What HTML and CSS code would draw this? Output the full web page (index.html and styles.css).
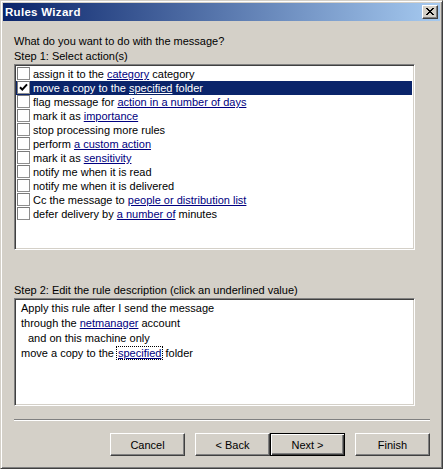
FILE: index.html
```html
<!DOCTYPE html>
<html>
<head>
<meta charset="utf-8">
<title>Rules Wizard</title>
<link rel="stylesheet" href="styles.css">
</head>
<body>
<div class="window">
  <div class="titlebar">
    <span class="title">Rules Wizard</span>
    <div class="close">
      <svg width="8" height="7" viewBox="0 0 8 7" shape-rendering="crispEdges"><path d="M0 0h2v1h-2zM6 0h2v1h-2zM1 1h2v1h-2zM5 1h2v1h-2zM2 2h4v1h-4zM3 3h2v1h-2zM2 4h4v1h-4zM1 5h2v1h-2zM5 5h2v1h-2zM0 6h2v1h-2zM6 6h2v1h-2z" fill="#000"/></svg>
    </div>
  </div>
  <div class="client">
    <div class="label">What do you want to do with the message?</div>
    <div class="label">Step 1: Select action(s)</div>
    <div class="sunken listbox">
      <div class="row"><span class="check"></span><span class="txt">assign it to the <a class="lnk">category</a> category</span></div>
      <div class="row selected"><span class="check"><svg width="11" height="11" viewBox="0 0 11 11"><path d="M2 5.2 L4.3 7.6 L9 2.4" fill="none" stroke="#000" stroke-width="2"/></svg></span><span class="txt">move a copy to the <a class="lnk">specified</a> folder</span></div>
      <div class="row"><span class="check"></span><span class="txt">flag message for <a class="lnk">action in a number of days</a></span></div>
      <div class="row"><span class="check"></span><span class="txt">mark it as <a class="lnk">importance</a></span></div>
      <div class="row"><span class="check"></span><span class="txt">stop processing more rules</span></div>
      <div class="row"><span class="check"></span><span class="txt">perform <a class="lnk">a custom action</a></span></div>
      <div class="row"><span class="check"></span><span class="txt">mark it as <a class="lnk">sensitivity</a></span></div>
      <div class="row"><span class="check"></span><span class="txt">notify me when it is read</span></div>
      <div class="row"><span class="check"></span><span class="txt">notify me when it is delivered</span></div>
      <div class="row"><span class="check"></span><span class="txt">Cc the message to <a class="lnk">people or distribution list</a></span></div>
      <div class="row"><span class="check"></span><span class="txt">defer delivery by <a class="lnk">a number of</a> minutes</span></div>
    </div>
    <div class="label step2">Step 2: Edit the rule description (click an underlined value)</div>
    <div class="sunken desc">
      <div class="line">Apply this rule after I send the message</div>
      <div class="line">through the <a class="lnk">netmanager</a> account</div>
      <div class="line indent">and on this machine only</div>
      <div class="line">move a copy to the <a class="lnk focus">specified</a> folder</div>
    </div>
    <div class="sep"></div>
    <div class="buttons">
      <button class="btn gap">Cancel</button>
      <button class="btn">&lt; Back</button>
      <button class="btn default gap">Next &gt;</button>
      <button class="btn">Finish</button>
    </div>
  </div>
</div>
</body>
</html>
```
FILE: styles.css
```css
* { box-sizing: border-box; }
html, body { margin: 0; padding: 0; }
body {
  background: #d4d0c8;
  font-family: "Liberation Sans", Arial, sans-serif;
  font-size: 11px;
  color: #000;
}
.window {
  width: 443px;
  height: 469px;
  border: 1px solid;
  border-color: #d4d0c8 #404040 #404040 #d4d0c8;
  box-shadow: inset 1px 1px #fff, inset -1px -1px #808080;
  padding: 2px;
  display: flex;
  flex-direction: column;
  background: #d4d0c8;
}
.titlebar {
  height: 18px;
  flex: none;
  display: flex;
  background: linear-gradient(to right, #0a246a, #a6caf0);
}
.title {
  flex: 1;
  color: #fff;
  font-weight: bold;
  font-size: 11.5px;
  letter-spacing: 0.3px;
  line-height: 18px;
  padding-left: 2px;
}
.close {
  width: 16px;
  height: 14px;
  margin: 2px 2px 0 0;
  background: #d4d0c8;
  border: 1px solid;
  border-color: #fff #404040 #404040 #fff;
  box-shadow: inset -1px -1px #808080;
  padding: 2px 0 0 3px;
}
.close svg { display: block; }
.client {
  flex: 1;
  padding: 13px 0 0 11px;
  display: flex;
  flex-direction: column;
}
.label { line-height: 15px; height: 15px; white-space: nowrap; }
.sunken {
  width: 401px;
  background: #fff;
  border: 1px solid;
  border-color: #808080 #fff #fff #808080;
  box-shadow: inset 1px 1px #404040, inset -1px -1px #d4d0c8;
  flex: none;
}
.listbox {
  height: 186px;
  padding: 2px 2px 2px 1px;
}
.row {
  height: 14px;
  line-height: 14px;
  display: flex;
  align-items: flex-start;
  white-space: nowrap;
}
.check {
  width: 13px;
  height: 13px;
  flex: none;
  margin-left: 1px;
  margin-right: 3px;
  background: #fff;
  border: 1px solid #8e8e8e;
  border-top-color: #7a7a7a;
  border-left-color: #7a7a7a;
}
.check svg { display: block; }
.lnk { color: #000080; text-decoration: underline; }
.row.selected { background: #0a246a; color: #fff; }
.row.selected .lnk { color: #fff; }
.step2 { margin-top: 33px; }
.desc {
  height: 108px;
  padding: 2px 1px 1px 6px;
}
.line { line-height: 15px; height: 15px; white-space: nowrap; }
.indent { padding-left: 7px; }
.focus { outline: 1px dotted #000; outline-offset: 0; padding: 0 1px; }
.sep {
  width: 416px;
  height: 2px;
  margin-top: 13px;
  border-top: 1px solid #808080;
  border-bottom: 1px solid #fff;
  flex: none;
}
.buttons {
  width: 416px;
  margin-top: 12px;
  display: flex;
  justify-content: flex-end;
}
.btn {
  width: 75px;
  height: 23px;
  padding: 0;
  margin: 0;
  font-family: "Liberation Sans", Arial, sans-serif;
  font-size: 11px;
  color: #000;
  background: #d4d0c8;
  border: 1px solid;
  border-color: #fff #404040 #404040 #fff;
  box-shadow: inset -1px -1px #808080;
  border-radius: 0;
  display: flex;
  align-items: center;
  justify-content: center;
}
.btn.gap { margin-right: 10px; }
.btn.default {
  border-color: #000;
  box-shadow: inset 1px 1px #fff, inset -1px -1px #404040, inset -2px -2px #808080;
}
```
